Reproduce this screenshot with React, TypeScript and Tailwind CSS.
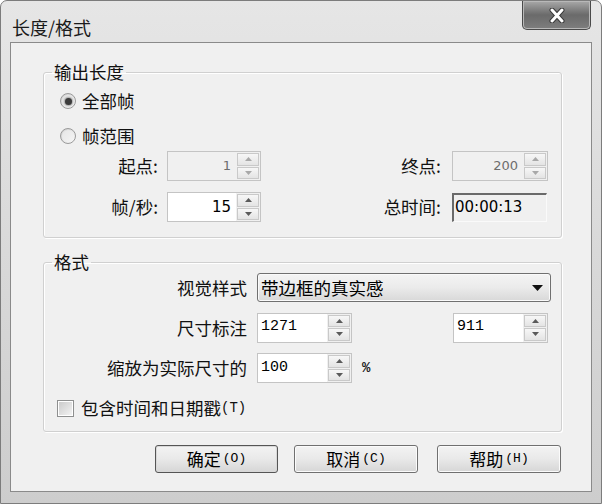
import React from "react";

const CJK = "font-['Noto_Sans_CJK_SC','Noto_Sans_CJK_JP',sans-serif]";

function Tri({ up, color }: { up: boolean; color: string }) {
  return (
    <svg width="7" height="4" viewBox="0 0 7 4">
      <polygon points={up ? "3.5,0 7,4 0,4" : "0,0 7,0 3.5,4"} fill={color} />
    </svg>
  );
}

function SpinBtns({ disabled }: { disabled?: boolean }) {
  const c = disabled ? "#a8a8a8" : "#5a5a5a";
  return (
    <div className="flex w-[24px] flex-col gap-[1px] bg-[#f0f0f0] p-[1px]">
      <div className="flex flex-1 items-center justify-center border border-[#c9c9c9] bg-gradient-to-b from-[#f7f7f7] to-[#e4e4e4]">
        <Tri up color={c} />
      </div>
      <div className="flex flex-1 items-center justify-center border border-[#c9c9c9] bg-gradient-to-b from-[#f7f7f7] to-[#e4e4e4]">
        <Tri up={false} color={c} />
      </div>
    </div>
  );
}

function Spin({
  value,
  disabled,
  w,
  left,
  big,
}: {
  value: string;
  disabled?: boolean;
  w: string;
  left?: boolean;
  big?: boolean;
}) {
  return (
    <div
      className={`flex h-[30px] ${w} border ${
        disabled ? "border-[#c4c4c4] bg-[#f0f0f0]" : "border-[#c4c4c4] bg-white"
      }`}
    >
      <div
        className={`flex flex-1 items-center ${
          left
            ? "justify-start pl-[3px] font-['Liberation_Mono',monospace] text-[15px] text-black"
            : `justify-end pr-[5px] font-['DejaVu_Sans',sans-serif] ${
                big ? "text-[15px] text-black" : "text-[13px] text-[#6d6d6d]"
              }`
        }`}
      >
        {value}
      </div>
      <SpinBtns disabled={disabled} />
    </div>
  );
}

function Radio({ checked }: { checked?: boolean }) {
  return (
    <div className="flex h-[16px] w-[16px] items-center justify-center rounded-full border border-[#9a9a9a] bg-gradient-to-br from-[#cfcfcf] to-[#fbfbfb]">
      <div className="flex h-[12px] w-[12px] items-center justify-center rounded-full bg-gradient-to-br from-[#e6e6e6] to-[#f4f4f4]">
        {checked && (
          <div className="h-[7px] w-[7px] rounded-full bg-[#3b3b3b] shadow-[0_0_2px_1px_#9a9a9a]" />
        )}
      </div>
    </div>
  );
}

function Btn({ cjk, key2, def }: { cjk: string; key2: string; def?: boolean }) {
  return (
    <div
      className={`flex h-[28px] items-center justify-center rounded-[3px] border ${
        def
          ? "border-[#555] shadow-[inset_0_0_0_1px_#d8d8d8]"
          : "border-[#707070] shadow-[inset_0_0_0_1px_#fbfbfb]"
      } bg-gradient-to-b from-[#f3f3f3] via-[#e9e9e9] to-[#d6d6d6]`}
    >
      <span className={`${CJK} text-[17px] leading-[20px] text-black`}>{cjk}</span>
      <span className="ml-[2px] font-['Liberation_Mono',monospace] text-[13px] leading-[20px] text-black">
        {key2}
      </span>
    </div>
  );
}

export default function App() {
  const label = `${CJK} text-[17.5px] leading-[20px] text-[#111]`;
  return (
    <div className="h-[504px] w-[602px] overflow-hidden bg-white">
      <div className="flex h-[504px] w-[602px] flex-col rounded-t-[7px] border border-[#7c7c7c] bg-gradient-to-b from-[#e6e6e6] via-[#d9d9d9] to-[#cdcdcd] px-[9px] pb-[11px]">
        {/* title bar */}
        <div className="flex h-[41px] items-start justify-between">
          <div className={`${CJK} ml-[2px] mt-[16px] text-[18px] leading-[20px] text-[#1a1a1a]`}>
            长度/格式
          </div>
          <div className="mr-[1px] flex h-[29px] w-[69px] items-center justify-center rounded-b-[5px] border border-t-0 border-[#4a4a4a] bg-gradient-to-b from-[#a9a9a9] via-[#6a6a6a] to-[#7e7e7e] shadow-[inset_0_0_0_1px_#b8b8b8]">
            <svg width="18" height="15" viewBox="0 0 18 15">
              <path d="M4 2 L14 13 M14 2 L4 13" stroke="#3a3a3a" strokeWidth="5" strokeLinecap="round" />
              <path d="M4 2 L14 13 M14 2 L4 13" stroke="#ffffff" strokeWidth="3" strokeLinecap="round" />
            </svg>
          </div>
        </div>

        {/* client */}
        <div className="flex flex-1 flex-col border border-[#8a8a8a] bg-[#f0f0f0] pl-[32px] pt-[19px]">
          <fieldset className="w-[519px] rounded-[3px] border border-[#d0d0d0] pb-[15px] shadow-[inset_1px_1px_0_#fff,1px_1px_0_#fff]">
            <legend className={`${label} ml-[8px] px-[2px]`}>输出长度</legend>
            <div className="mt-[8px] flex h-[22px] items-center pl-[16px]">
              <Radio checked />
              <span className={`${label} ml-[6px]`}>全部帧</span>
            </div>
            <div className="mt-[13px] flex h-[22px] items-center pl-[16px]">
              <Radio />
              <span className={`${label} ml-[6px]`}>帧范围</span>
            </div>
            <div className="mt-[4px] flex h-[30px] items-center">
              <span className={`${label} w-[114px] text-right`}>起点:</span>
              <div className="ml-[9px]">
                <Spin value="1" disabled w="w-[94px]" />
              </div>
              <span className={`${label} w-[180px] text-right`}>终点:</span>
              <div className="ml-[11px]">
                <Spin value="200" disabled w="w-[96px]" />
              </div>
            </div>
            <div className="mt-[11px] flex h-[30px] items-center">
              <span className={`${label} w-[114px] text-right`}>帧/秒:</span>
              <div className="ml-[9px]">
                <Spin value="15" big w="w-[94px]" />
              </div>
              <span className={`${label} w-[180px] text-right`}>总时间:</span>
              <div className="ml-[11px] flex h-[29px] w-[95px] items-start border-b border-l-2 border-r border-t-2 border-b-[#fafafa] border-l-[#6a6a6a] border-r-[#fafafa] border-t-[#6a6a6a] pl-[1px] pt-[3px] font-['DejaVu_Sans',sans-serif] text-[15px] leading-[18px] text-black">
                00:00:13
              </div>
            </div>
          </fieldset>

          <fieldset className="mt-[14px] w-[519px] rounded-[3px] border border-[#d0d0d0] pb-[12px] shadow-[inset_1px_1px_0_#fff,1px_1px_0_#fff]">
            <legend className={`${label} ml-[8px] px-[2px]`}>格式</legend>
            <div className="mt-[1px] flex h-[29px] items-center">
              <span className={`${label} w-[203px] text-right`}>视觉样式</span>
              <div className="ml-[10px] flex h-[29px] w-[294px] items-center justify-between rounded-[3px] border border-[#707070] bg-gradient-to-b from-[#f4f4f4] via-[#ebebeb] to-[#d8d8d8] pl-[3px] pr-[7px] shadow-[inset_0_0_0_1px_#fafafa]">
                <span className={`${CJK} text-[17.5px] leading-[20px] text-black`}>带边框的真实感</span>
                <svg width="11" height="6" viewBox="0 0 11 6">
                  <polygon points="0,0 11,0 5.5,6" fill="#111" />
                </svg>
              </div>
            </div>
            <div className="mt-[10px] flex h-[31px] items-center">
              <span className={`${label} w-[203px] text-right`}>尺寸标注</span>
              <div className="ml-[10px]">
                <Spin value="1271" left w="w-[95px]" />
              </div>
              <div className="ml-[101px]">
                <Spin value="911" left w="w-[95px]" />
              </div>
            </div>
            <div className="mt-[10px] flex h-[30px] items-center">
              <span className={`${label} w-[203px] text-right`}>缩放为实际尺寸的</span>
              <div className="ml-[10px]">
                <Spin value="100" left w="w-[95px]" />
              </div>
              <span className="ml-[10px] font-['Liberation_Mono',monospace] text-[14px] font-bold text-[#222]">%</span>
            </div>
            <div className="mt-[14px] flex h-[22px] items-center pl-[13px]">
              <div className="flex h-[17px] w-[17px] items-center justify-center border border-[#8e8f8f] bg-white">
                <div className="h-[13px] w-[13px] bg-gradient-to-br from-[#cbcbcb] to-[#f3f3f3]" />
              </div>
              <span className={`${label} ml-[7px]`}>包含时间和日期戳</span>
              <span className="font-['Liberation_Mono',monospace] text-[14px] text-[#111]">(T)</span>
            </div>
          </fieldset>

          <div className="ml-[112px] mt-[13px] flex">
            <div className="w-[123px]">
              <Btn cjk="确定" key2="(O)" def />
            </div>
            <div className="ml-[16px] w-[124px]">
              <Btn cjk="取消" key2="(C)" />
            </div>
            <div className="ml-[19px] w-[124px]">
              <Btn cjk="帮助" key2="(H)" />
            </div>
          </div>
        </div>
      </div>
    </div>
  );
}
